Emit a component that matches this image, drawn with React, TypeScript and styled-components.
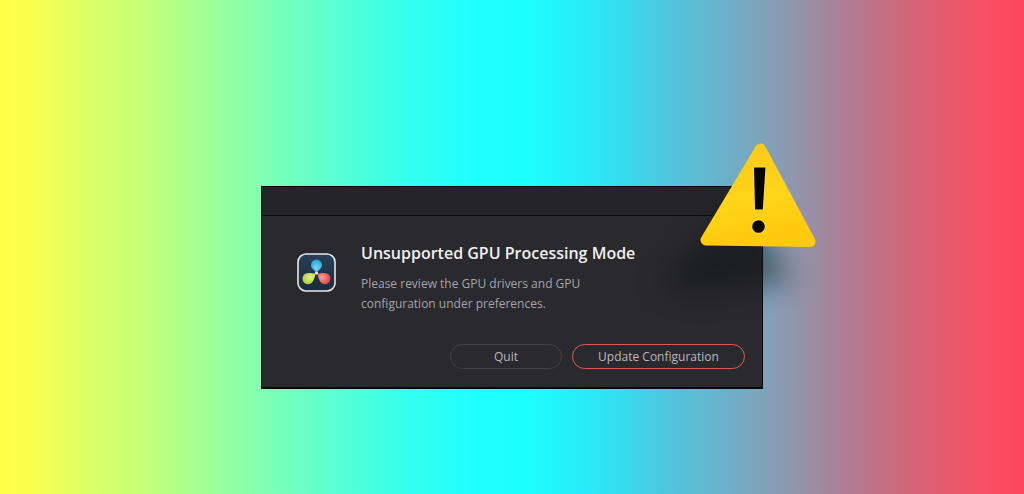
import React from "react";
import styled, { createGlobalStyle } from "styled-components";

const GlobalStyle = createGlobalStyle`
  *, *::before, *::after { box-sizing: border-box; }
  body { margin: 0; font-family: "Open Sans", "Noto Sans", sans-serif; }
`;

const Backdrop = styled.main`
  min-height: 100vh;
  display: flex;
  flex-direction: column;
  align-items: center;
  padding: 186px 16px 96px;
  background: linear-gradient(
    90deg,
    #ffff48 0%,
    #faff4e 3%,
    #e4ff62 7%,
    #c6ff78 14%,
    #a2ff94 20%,
    #7effb4 26%,
    #58ffd4 33%,
    #38ffec 39%,
    #20ffff 46%,
    #1cffff 51%,
    #2ae8f8 58%,
    #4cc8de 65%,
    #6cb0c8 71%,
    #8c98b0 77%,
    #b07c92 83%,
    #d46478 89%,
    #f85064 96%,
    #ff465a 100%
  );
`;

const Dialog = styled.section`
  position: relative;
  width: 100%;
  max-width: 502px;
  border: 1px solid #08080b;
  border-bottom-width: 2px;
  background: #2a292e;
`;

const TitleBar = styled.header`
  height: 29px;
  border-bottom: 1px solid #0c0c0f;
  background: #252429;
`;

const Content = styled.div`
  display: flex;
  align-items: flex-start;
  gap: 25px;
  padding: 26px 35px 0;
`;

const AppIcon = styled.svg`
  flex: none;
  width: 39px;
  height: 39px;
  margin-top: 11px;
`;

const Message = styled.div`
  display: flex;
  flex-direction: column;
  gap: 10px;
`;

const Heading = styled.h1`
  margin: 0;
  color: #f0f0f2;
  font-size: 16px;
  font-weight: 600;
  line-height: 22px;
`;

const Description = styled.p`
  max-width: 256px;
  margin: 0;
  color: #a5a4a9;
  font-size: 12px;
  font-weight: 400;
  line-height: 20px;
`;

const Actions = styled.footer`
  display: flex;
  justify-content: flex-end;
  gap: 10px;
  padding: 30px 17px 18px;
`;

const Button = styled.button<{ $primary?: boolean }>`
  width: ${({ $primary }) => ($primary ? 173 : 112)}px;
  height: 25px;
  padding: 0;
  border: 1px solid ${({ $primary }) => ($primary ? "#d85c56" : "#424146")};
  border-radius: 13px;
  background: transparent;
  color: #b9b8bd;
  font-family: inherit;
  font-size: 12px;
  font-weight: 400;
  line-height: 20px;
  cursor: pointer;
`;

const Warning = styled.svg`
  position: absolute;
  top: -68px;
  right: -106px;
  width: 200px;
  height: 200px;
  pointer-events: none;
  overflow: visible;
`;

function ResolveLogo() {
  return (
    <AppIcon viewBox="0 0 39 39" aria-hidden="true">
      <defs>
        <linearGradient id="tile" x1="0" y1="0" x2="0" y2="1">
          <stop offset="0" stopColor="#284057" />
          <stop offset="1" stopColor="#1b2b3c" />
        </linearGradient>
        <radialGradient id="blue" cx=".5" cy=".65" r=".6">
          <stop offset="0" stopColor="#78d8f4" />
          <stop offset="1" stopColor="#2daad8" />
        </radialGradient>
        <radialGradient id="green" cx=".6" cy=".4" r=".6">
          <stop offset="0" stopColor="#e7ee91" />
          <stop offset="1" stopColor="#b4d036" />
        </radialGradient>
        <radialGradient id="red" cx=".35" cy=".4" r=".7">
          <stop offset="0" stopColor="#f3a39c" />
          <stop offset="1" stopColor="#d83e3c" />
        </radialGradient>
      </defs>
      <rect x="1" y="1" width="37" height="37" rx="8" fill="url(#tile)" stroke="#e4e9ed" strokeWidth="1.6" />
      <g transform="translate(0 .5)">
        <path d="M19.500 19.300C17.500 16.400 14 15 14 11.600a5.500 5.500 0 0 1 11 0c0 3.400-3.500 4.800-5.500 7.700z" fill="url(#blue)" />
        <path d="M18.800 20.200C17.600 23.600 16.700 28.300 13.800 30a5.600 5.600 0 0 1-5.600-9.700C11.100 18.600 15.300 19.900 18.800 20.200z" fill="url(#green)" />
        <path d="M20.200 20.200C21.400 23.600 22.300 28.300 25.200 30a5.600 5.600 0 0 0 5.600-9.700C27.900 18.600 23.700 19.900 20.200 20.200z" fill="url(#red)" />
        <circle cx="19.500" cy="19.600" r="1.500" fill="#eef4f6" />
      </g>
    </AppIcon>
  );
}

function WarningSign() {
  return (
    <Warning viewBox="0 0 200 200" role="img" aria-label="Warning">
      <defs>
        <linearGradient id="sign" x1="0" y1="0" x2="0.2" y2="1">
          <stop offset="0" stopColor="#fac81a" />
          <stop offset="0.6" stopColor="#ffd51a" />
          <stop offset="1" stopColor="#ffcb0c" />
        </linearGradient>
        <filter id="soft" x="-60%" y="-60%" width="220%" height="220%" colorInterpolationFilters="sRGB">
          <feGaussianBlur stdDeviation="14" />
        </filter>
      </defs>
      <path d="M72 80L-10 166L30 176L124 162z" fill="#101418" opacity=".5" filter="url(#soft)" />
      <path
        d="M92.500 30L38 121L142 122.500z"
        fill="url(#sign)"
        stroke="url(#sign)"
        strokeWidth="11"
        strokeLinejoin="round"
      />
      <path d="M86 48.500H97.500L94.800 90.500H87z" fill="#080600" stroke="#fbe04a" strokeWidth="1.500" paintOrder="stroke" />
      <circle cx="90.500" cy="107.500" r="6.300" fill="#080600" stroke="#fbe04a" strokeWidth="1.500" paintOrder="stroke" />
    </Warning>
  );
}

export default function App() {
  return (
    <>
      <GlobalStyle />
      <Backdrop>
        <Dialog role="alertdialog" aria-labelledby="dialog-title" aria-describedby="dialog-text">
          <TitleBar />
          <Content>
            <ResolveLogo />
            <Message>
              <Heading id="dialog-title">Unsupported GPU Processing Mode</Heading>
              <Description id="dialog-text">
                Please review the GPU drivers and GPU configuration under preferences.
              </Description>
            </Message>
          </Content>
          <Actions>
            <Button type="button">Quit</Button>
            <Button type="button" $primary>
              Update Configuration
            </Button>
          </Actions>
          <WarningSign />
        </Dialog>
      </Backdrop>
    </>
  );
}
